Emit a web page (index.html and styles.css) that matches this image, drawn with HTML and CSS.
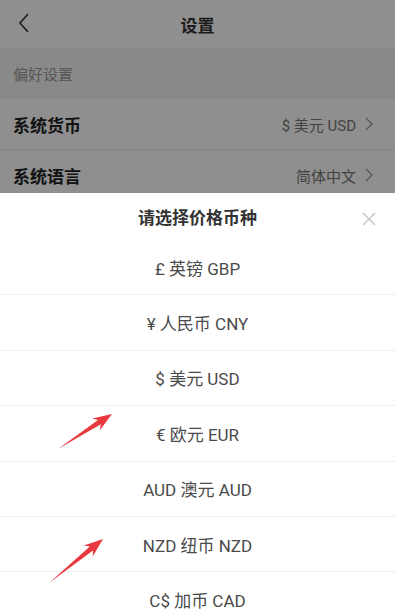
FILE: index.html
```html
<!DOCTYPE html>
<html lang="zh-CN">
<head>
    <meta charset="UTF-8">
    <meta name="viewport" content="width=device-width, initial-scale=1.0">
    <title>设置</title>
    <link rel="stylesheet" href="styles.css">
</head>
<body>
    <div class="page">
        <header class="topbar">
            <svg class="back" width="12" height="20" viewBox="0 0 12 20">
                <path d="M10 1 L2 10 L10 19" fill="none" stroke="#333" stroke-width="1.6"/>
            </svg>
            <h1 class="topbar-title">设置</h1>
        </header>

        <div class="section-title">偏好设置</div>

        <div class="setting-row">
            <span class="setting-name">系统货币</span>
            <span class="setting-value">$ 美元 USD
                <svg class="chev" width="8" height="14" viewBox="0 0 8 14"><path d="M1 1 L7 7 L1 13" fill="none" stroke="#999" stroke-width="1.3"/></svg>
            </span>
        </div>
        <div class="setting-row">
            <span class="setting-name">系统语言</span>
            <span class="setting-value">简体中文
                <svg class="chev" width="8" height="14" viewBox="0 0 8 14"><path d="M1 1 L7 7 L1 13" fill="none" stroke="#999" stroke-width="1.3"/></svg>
            </span>
        </div>
    </div>

    <div class="mask"></div>

    <div class="sheet">
        <div class="sheet-head">
            <span class="sheet-title">请选择价格币种</span>
            <svg class="close" width="14" height="14" viewBox="0 0 14 14">
                <path d="M1 1 L13 13 M13 1 L1 13" stroke="#c8c8c8" stroke-width="1.5"/>
            </svg>
        </div>
        <ul class="currency-list">
            <li>£ 英镑 GBP</li>
            <li>¥ 人民币 CNY</li>
            <li>$ 美元 USD</li>
            <li>€ 欧元 EUR</li>
            <li>AUD 澳元 AUD</li>
            <li>NZD 纽币 NZD</li>
            <li>C$ 加币 CAD</li>
        </ul>
    </div>

    <!-- annotation arrows -->
    <svg class="arrow arrow-one" width="80" height="50" viewBox="0 0 80 50">
        <polygon points="18,44 60.8,19.3 59.9,25.2 72,9 52.3,13.4 58,15.1" fill="#e8393f"/>
    </svg>
    <svg class="arrow arrow-two" width="90" height="70" viewBox="0 0 90 70">
        <polygon points="19,58 63,25.4 62.7,31.4 73,14 53.9,20.6 59.8,21.6" fill="#e8393f"/>
    </svg>
</body>
</html>
```

FILE: styles.css
```css
* {
    box-sizing: border-box;
}

body {
    margin: 0;
    width: 395px;
    height: 612px;
    overflow: hidden;
    position: relative;
    background-color: #fff;
    font-family: Roboto, "Noto Sans CJK SC", sans-serif;
    color: #333;
}

.topbar {
    height: 48px;
    display: flex;
    align-items: center;
    justify-content: center;
    position: relative;
    background-color: #fff;
}

.back {
    position: absolute;
    left: 18px;
    top: 13px;
}

.topbar-title {
    margin: 0;
    font-size: 17px;
    font-weight: 700;
    color: #333;
}

.section-title {
    height: 51px;
    display: flex;
    align-items: center;
    padding-left: 13px;
    background-color: #f4f4f4;
    font-size: 15px;
    color: #999;
}

.setting-row {
    height: 51px;
    display: flex;
    align-items: center;
    justify-content: space-between;
    padding: 0 22px 0 13px;
    border-bottom: 1px solid #ececec;
}

.setting-name {
    font-size: 17px;
    font-weight: 700;
    color: #222;
}

.setting-value {
    display: flex;
    align-items: center;
    gap: 9px;
    font-size: 15px;
    color: #777;
}

.mask {
    position: absolute;
    inset: 0;
    background-color: rgba(0, 0, 0, 0.44);
}

.sheet {
    position: absolute;
    top: 193px;
    left: 0;
    right: 0;
    bottom: 0;
    background-color: #fff;
}

.sheet-head {
    height: 47px;
    display: flex;
    align-items: center;
    justify-content: center;
    position: relative;
}

.sheet-title {
    font-size: 17px;
    font-weight: 700;
    color: #333;
}

.close {
    position: absolute;
    right: 19px;
    top: 19px;
}

.currency-list {
    list-style: none;
    margin: 0;
    padding: 0;
}

.currency-list li {
    height: 55.4px;
    display: flex;
    align-items: center;
    justify-content: center;
    border-bottom: 1px solid #efefef;
    font-size: 17px;
    color: #4a4a4a;
}

.arrow {
    position: absolute;
}

.arrow-one {
    left: 40px;
    top: 405px;
}

.arrow-two {
    left: 30px;
    top: 525px;
}
```
